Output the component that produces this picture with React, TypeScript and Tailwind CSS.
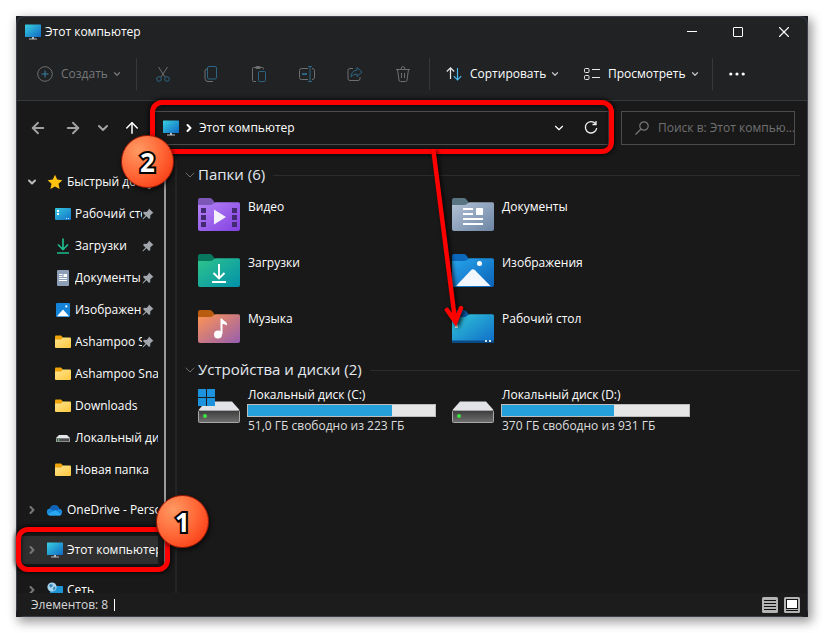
import {
  ArrowLeft,
  ArrowRight,
  ArrowUp,
  ChevronDown,
  ChevronRight,
  X
} from 'lucide-react';

import { FC, ReactNode } from 'react';

const MonitorIcon: FC = () => (
  <svg viewBox="0 0 16 16" className="size-4 flex-none">
    <defs>
      <linearGradient id="monitor" x1="0" y1="0" x2="1" y2="1">
        <stop offset="0" stopColor="#38d0e0" />
        <stop offset="1" stopColor="#1169c4" />
      </linearGradient>
    </defs>
    <rect y="0.500" width="16" height="12.500" rx="0.6" fill="url(#monitor)" />
    <path d="M7 13h2v1.500h3v1H4v-1h3z" fill="#b9bdc1" />
  </svg>
);

const StarIcon: FC = () => (
  <svg viewBox="0 0 16 16" className="size-4 flex-none">
    <path
      d="M8 .8l2.2 4.8 5.2.6-3.9 3.6 1.1 5.3L8 12.4l-4.6 2.7 1.1-5.3L.6 6.2l5.2-.6z"
      fill="#ffc20e"
    />
  </svg>
);

const DesktopIcon: FC = () => (
  <svg viewBox="0 0 16 16" className="size-4 flex-none">
    <defs>
      <linearGradient id="desk" x1="0" y1="0" x2="1" y2="1">
        <stop offset="0" stopColor="#35c8dc" />
        <stop offset="1" stopColor="#1272ca" />
      </linearGradient>
    </defs>
    <rect y="2" width="16" height="12" rx="1" fill="url(#desk)" />
    <path d="M2 4h2v2H2zM2 7h2v2H2z" fill="#fff" />
    <path d="M11 12h1v1h-1zM13 12h1v1h-1z" fill="#d6efff" />
  </svg>
);

const DownloadIcon: FC = () => (
  <svg viewBox="0 0 16 16" className="size-4 flex-none">
    <path
      d="M8 .5v11M3 6.500L8 11.500l5-5M2 15h12"
      fill="none"
      stroke="#1fb98c"
      strokeWidth="1.7"
    />
  </svg>
);

const DocumentIcon: FC = () => (
  <svg viewBox="0 0 16 16" className="size-4 flex-none">
    <rect x="2" width="12" height="16" rx="1" fill="#8d9fb6" />
    <path
      d="M4 4.5h3.5M4 6.5h3.5M4 8.5h8M4 10.5h8"
      stroke="#fff"
      strokeWidth="1.1"
    />
    <rect x="8.5" y="4" width="3.5" height="3" fill="#fff" />
  </svg>
);

const PictureIcon: FC = () => (
  <svg viewBox="0 0 16 16" className="size-4 flex-none">
    <rect x="1" y="1" width="14" height="14" rx="1" fill="#1583d8" />
    <path d="M2 14.2L8 7.5l6 6.7z" fill="#fff" />
    <circle cx="11.3" cy="4.4" r="1.1" fill="#fff" />
  </svg>
);

const FolderIcon: FC = () => (
  <svg viewBox="0 0 16 16" className="size-4 flex-none">
    <defs>
      <linearGradient id="folder" x1="0" y1="0" x2="1" y2="1">
        <stop offset="0" stopColor="#ffe590" />
        <stop offset="1" stopColor="#ffc83c" />
      </linearGradient>
    </defs>
    <path d="M0 2.5Q0 1.500 1 1.500H6L8 3.500V6H0z" fill="#f0a30a" />
    <path
      d="M0 5.500H6L8 3.500H15Q16 3.500 16 4.500V13Q16 14 15 14H1Q0 14 0 13z"
      fill="url(#folder)"
    />
  </svg>
);

const SmallDriveIcon: FC = () => (
  <svg viewBox="0 0 16 16" className="size-4 flex-none">
    <path d="M4 5h8l3 3H1z" fill="#e4e6e8" />
    <rect x="1" y="8" width="14" height="4" rx="0.5" fill="#9a9c9e" />
    <rect x="2" y="8.600" width="12" height="2.600" fill="#4a4c4e" />
    <rect x="3" y="9.300" width="1.300" height="1.300" fill="#5bea5b" />
  </svg>
);

const CloudIcon: FC = () => (
  <svg viewBox="0 0 16 16" className="size-4 flex-none">
    <path
      d="M3.500 13.500A3.500 3.500 0 0 1 3 6.500A4.800 4.800 0 0 1 12.200 6.800A3.400 3.400 0 0 1 12.500 13.500z"
      fill="#1787d8"
    />
    <path d="M3 6.500A4.800 4.800 0 0 1 12.200 6.800L8 9.500z" fill="#0f62b5" />
    <path d="M1 12L8.500 8l6 4.500Q13.800 13.500 12.500 13.500H3.500Q1.800 13.500 1 12z" fill="#2aa8f0" />
  </svg>
);

const NetworkIcon: FC = () => (
  <svg viewBox="0 0 16 16" className="size-4 flex-none">
    <rect x="3" y="4" width="13" height="10" rx="0.6" fill="#1d94d6" />
    <circle cx="5" cy="5" r="4.600" fill="#a9d4ee" />
    <path
      d="M2 3l2-1 2 1-1 2-2 .5zM6 5.500l2-1 .5 2L6.500 9z"
      fill="#3c86b8"
    />
  </svg>
);

const PinIcon: FC = () => (
  <svg viewBox="0 0 12 12" className="size-3 flex-none">
    <path
      d="M7 .5l4.500 4.500-1.300.5-2 2 .1 2.500L7 11 4.500 8.300 1 11.500l-.6-.4L3.500 7.500 1 5l1-1.200 2.500.1 2-2z"
      fill="#a0a6ab"
    />
  </svg>
);

type NavItem = {
  label: string;
  icon: ReactNode;
  pinned?: boolean;
};

const quickAccess: NavItem[] = [
  { label: 'Рабочий стол', icon: <DesktopIcon />, pinned: true },
  { label: 'Загрузки', icon: <DownloadIcon />, pinned: true },
  { label: 'Документы', icon: <DocumentIcon />, pinned: true },
  { label: 'Изображения', icon: <PictureIcon />, pinned: true },
  { label: 'Ashampoo Snap', icon: <FolderIcon />, pinned: true },
  { label: 'Ashampoo Snap', icon: <FolderIcon /> },
  { label: 'Downloads', icon: <FolderIcon /> },
  { label: 'Локальный диск', icon: <SmallDriveIcon /> },
  { label: 'Новая папка', icon: <FolderIcon /> }
];

const FolderBase: FC<{
  id: string;
  tab: string;
  from: string;
  to: string;
  children: ReactNode;
}> = ({ id, tab, from, to, children }) => (
  <svg viewBox="0 0 42 33" className="h-[33px] w-[42px] flex-none">
    <defs>
      <linearGradient id={id} x1="0" y1="0" x2="1" y2="1">
        <stop offset="0" stopColor={from} />
        <stop offset="1" stopColor={to} />
      </linearGradient>
    </defs>
    <path d="M0 2Q0 0 2 0H12Q13.500 0 14.500 1.500L17 5V10H0z" fill={tab} />
    <path
      d="M0 7H12Q14 7 15 6L16 5Q17 4.300 18 4.300H40.500Q42 4.300 42 6V31Q42 33 40 33H2Q0 33 0 31z"
      fill={`url(#${id})`}
    />
    {children}
  </svg>
);

const folders = [
  {
    label: 'Видео',
    icon: (
      <FolderBase id="video" tab="#7d57b8" from="#b483f7" to="#8340e0">
        <path
          d="M3 10h5v5H3zM3 17h5v5H3zM3 24h5v5H3zM34 10h5v5h-5zM34 17h5v5h-5zM34 24h5v5h-5z"
          fill="#432a72"
        />
        <path d="M16 11.500L28 19 16 26.500z" fill="#f4f0fa" />
      </FolderBase>
    )
  },
  {
    label: 'Документы',
    icon: (
      <FolderBase id="docs" tab="#587483" from="#b3c2d6" to="#6c85a4">
        <path
          d="M11 11h10M11 16h10M11 21h20M11 26h20"
          stroke="#fff"
          strokeWidth="2"
        />
        <rect x="24" y="10" width="7" height="7" rx="0.500" fill="#fff" />
      </FolderBase>
    )
  },
  {
    label: 'Загрузки',
    icon: (
      <FolderBase id="downloads" tab="#08785f" from="#2fc58c" to="#0290aa">
        <path
          d="M21 10v14M15.500 19l5.500 5.500 5.500-5.500M14 28h14"
          fill="none"
          stroke="#fff"
          strokeWidth="1.900"
        />
      </FolderBase>
    )
  },
  {
    label: 'Изображения',
    icon: (
      <FolderBase id="images" tab="#0b68bb" from="#27a5ec" to="#0c62b8">
        <path
          d="M4 32L19 16.300Q21 14.300 23 16.300L38.500 32z"
          fill="#f2f7fd"
        />
        <circle cx="27.500" cy="9.500" r="2.500" fill="#fff" />
      </FolderBase>
    )
  },
  {
    label: 'Музыка',
    icon: (
      <FolderBase id="music" tab="#b85c10" from="#ff9552" to="#965eb0">
        <path
          d="M22.500 24V8.500H24C25 11 29 11.500 29 14V15.500C27 14 25 14 24.500 14V24z"
          fill="#fff"
        />
        <circle cx="20" cy="24.500" r="4" fill="#fff" />
      </FolderBase>
    )
  },
  {
    label: 'Рабочий стол',
    icon: (
      <FolderBase id="desktop" tab="#0b5db0" from="#31c6d8" to="#0f6bc8">
        <path d="M0 30.500H42V31Q42 33 40 33H2Q0 33 0 31z" fill="#0b4a85" />
        <path d="M3 15h3v3H3zM33 30h2v2h-2zM37 30h2v2h-2z" fill="#cfe9ee" />
      </FolderBase>
    )
  }
];

const drives = [
  {
    label: 'Локальный диск (C:)',
    info: '51,0 ГБ свободно из 223 ГБ',
    used: 77,
    system: true
  },
  {
    label: 'Локальный диск (D:)',
    info: '370 ГБ свободно из 931 ГБ',
    used: 60,
    system: false
  }
];

const DriveIcon: FC<{ system: boolean }> = ({ system }) => (
  <svg viewBox="0 0 42 34" className="h-[34px] w-[42px] flex-none">
    <defs>
      <linearGradient id="drive" x1="0" y1="0" x2="0" y2="1">
        <stop offset="0" stopColor="#3c3c3c" />
        <stop offset="1" stopColor="#707070" />
      </linearGradient>
    </defs>
    <path d="M8 12.500H34L41.500 21H.5z" fill="#e2e3e7" />
    <rect
      x="0.500"
      y="21.500"
      width="41"
      height="12"
      rx="1"
      fill="url(#drive)"
      stroke="#a8a8a8"
    />
    <circle cx="7" cy="27" r="2" fill="#3fe03f" />
    {system && (
      <>
        <rect y="0" width="16" height="17" fill="#191919" />
        <path d="M0 0h8v8H0zM9 0h8v8H9zM0 9h8v8H0zM9 9h8v8H9z" fill="#1c93dc" />
      </>
    )}
  </svg>
);

const toolIcons = [
  {
    label: 'Вырезать',
    icon: (
      <>
        <path d="M3.500 1l6.500 10M12.500 1L6 11" stroke="#6d6f71" />
        <circle cx="4" cy="13" r="2.300" stroke="#2d6684" />
        <circle cx="12" cy="13" r="2.300" stroke="#2d6684" />
      </>
    )
  },
  {
    label: 'Копировать',
    icon: (
      <>
        <path d="M4 3Q2 3 2 5V12.500Q2 15.500 5 15.500H10" stroke="#6d6f71" />
        <rect x="4.500" y="0.500" width="9" height="12.500" rx="1.500" stroke="#2d6684" />
      </>
    )
  },
  {
    label: 'Вставить',
    icon: (
      <>
        <path d="M5 15.500H2.500Q1.500 15.500 1.500 14.500V2.500Q1.500 1.500 2.500 1.500H11.500Q12.500 1.500 12.500 2.500V3.500" stroke="#6d6f71" />
        <rect x="4.500" y="0.500" width="5" height="2" rx="1" stroke="#6d6f71" />
        <rect x="7.500" y="5.500" width="7" height="10" rx="1" stroke="#2d6684" />
      </>
    )
  },
  {
    label: 'Переименовать',
    icon: (
      <>
        <path d="M9 2.500H2.500Q.5 2.500.5 4.500V11.500Q.5 13.500 2.500 13.500H9M13 2.500Q15.500 2.500 15.500 4.500V11.500Q15.500 13.500 13 13.500" stroke="#6d6f71" />
        <path d="M11 .5V15.500M9 .5h4M9 15.500h4" stroke="#2d6684" />
        <path d="M3 8h5" stroke="#2d6684" strokeWidth="2" />
      </>
    )
  },
  {
    label: 'Поделиться',
    icon: (
      <>
        <path d="M6 2.500H3Q1 2.500 1 4.500V12.500Q1 14.500 3 14.500H11Q13 14.500 13 12.500V11" stroke="#6d6f71" />
        <path d="M10 1.500L15 6l-5 4.500V8Q6 8 4 11Q4 5 10 4z" stroke="#2d6684" />
      </>
    )
  },
  {
    label: 'Удалить',
    icon: (
      <path
        d="M1 3.500h14M6 3.500Q6 .5 8 .5T10 3.500M2.500 3.500L4 14Q4 15.500 5.500 15.500H10.500Q12 15.500 12 14L13.500 3.500M6.500 7v5M9.500 7v5"
        stroke="#6d6f71"
      />
    )
  }
];

const Divider: FC = () => <div className="h-8 w-px flex-none bg-[#37383a]" />;

const Badge: FC<{ value: string }> = ({ value }) => (
  <span className="flex size-[53px] items-center justify-center rounded-full border border-[#a51a05] bg-radial-[at_32%_28%] from-[#ff9a62] via-[#ff6535] to-[#f52c08] text-[26px] leading-8 font-bold text-white shadow-[1px_2px_5px_rgba(0,0,0,0.7)] [-webkit-text-stroke:4px_black] [paint-order:stroke_fill]">
    {value}
  </span>
);

const TitleBar: FC = () => (
  <header className="flex h-[31px] flex-none items-center pb-0.5 pl-2">
    <MonitorIcon />
    <h1 className="ml-1 flex-1 text-white">Этот компьютер</h1>
    <button
      type="button"
      aria-label="Свернуть"
      className="flex h-full w-[46px] items-center justify-center"
    >
      <span className="h-px w-2.5 bg-white" />
    </button>
    <button
      type="button"
      aria-label="Развернуть"
      className="flex h-full w-[46px] items-center justify-center"
    >
      <span className="size-2.5 rounded-[1px] border border-white" />
    </button>
    <button
      type="button"
      aria-label="Закрыть"
      className="flex h-full w-[46px] items-center justify-center"
    >
      <X className="size-[18px] text-white" strokeWidth={1.5} />
    </button>
  </header>
);

const Toolbar: FC = () => (
  <div className="flex h-[53px] flex-none items-center border-b border-[#36383b] text-white">
    <button
      type="button"
      disabled
      className="flex w-[119px] items-center pl-5 text-[#777879]"
    >
      <svg viewBox="0 0 16 16" className="size-4 flex-none" fill="none">
        <circle cx="8" cy="8" r="7.300" stroke="#6d6f71" />
        <path d="M8 4.500v7M4.500 8h7" stroke="#3580a8" />
      </svg>
      <span className="ml-2">Создать</span>
      <ChevronDown className="ml-1 size-2.5" strokeWidth={3} />
    </button>
    <Divider />
    <div className="mx-0.5 flex">
      {toolIcons.map(t => (
        <button
          key={t.label}
          type="button"
          disabled
          aria-label={t.label}
          className="flex h-8 w-12 items-center justify-center"
        >
          <svg viewBox="0 0 16 16" className="size-4" fill="none">
            {t.icon}
          </svg>
        </button>
      ))}
    </div>
    <Divider />
    <button type="button" className="flex w-[138px] items-center pl-4">
      <svg viewBox="0 0 16 16" className="size-4 flex-none" fill="none">
        <path d="M4.500 13V2M.8 5.500L4.500 1.800 8.200 5.500" stroke="#e8e8e8" strokeWidth="1.200" />
        <path d="M11.500 2v12M7.800 10.200l3.700 3.700 3.700-3.700" stroke="#4cb8f0" strokeWidth="1.200" />
      </svg>
      <span className="ml-2">Сортировать</span>
      <ChevronDown className="ml-1 size-2.5 text-[#c0c0c0]" strokeWidth={3} />
    </button>
    <button type="button" className="flex w-[144px] items-center pl-4">
      <svg
        viewBox="0 0 16 16"
        className="size-4 flex-none"
        fill="none"
        stroke="#e8e8e8"
      >
        <rect x="0.500" y="2.500" width="4.500" height="4" rx="1" />
        <rect x="0.500" y="9.500" width="4.500" height="4" rx="1" />
        <path d="M8 3.500h8M8 11.500h8" />
      </svg>
      <span className="ml-2">Просмотреть</span>
      <ChevronDown className="ml-1 size-2.5 text-[#c0c0c0]" strokeWidth={3} />
    </button>
    <Divider />
    <button type="button" aria-label="Подробнее" className="px-4">
      <svg viewBox="0 0 16 16" className="size-4" fill="#fff">
        <circle cx="1.800" cy="8" r="1.600" />
        <circle cx="8" cy="8" r="1.600" />
        <circle cx="14.200" cy="8" r="1.600" />
      </svg>
    </button>
  </div>
);

const AddressRow: FC = () => (
  <div className="flex flex-none items-center bg-[#191919] pt-2.5 pr-3 pb-[15px] pl-[5px]">
    <button type="button" aria-label="Назад" className="flex w-8 justify-center">
      <ArrowLeft className="size-[18px] text-[#a2a2a2]" strokeWidth={2.5} />
    </button>
    <button
      type="button"
      aria-label="Вперёд"
      className="ml-[3px] flex w-8 justify-center"
    >
      <ArrowRight className="size-[18px] text-[#a2a2a2]" strokeWidth={2.5} />
    </button>
    <button
      type="button"
      aria-label="Последние расположения"
      className="flex w-7 justify-center"
    >
      <ChevronDown className="size-4 text-[#a2a2a2]" strokeWidth={3} />
    </button>
    <button
      type="button"
      aria-label="Вверх"
      className="flex w-[30px] justify-center"
    >
      <ArrowUp className="size-[18px] text-white" strokeWidth={2} />
    </button>
    <div className="relative ml-1.5 flex h-[34px] min-w-0 flex-1 items-center border border-[#4c4c4c] pl-[9px]">
      <MonitorIcon />
      <ChevronRight className="ml-1 size-3 text-white" strokeWidth={4} />
      <span className="ml-1 flex-1 text-white">Этот компьютер</span>
      <button type="button" aria-label="Журнал" className="flex w-8 justify-center">
        <ChevronDown className="size-3.5 text-white" strokeWidth={2} />
      </button>
      <button
        type="button"
        aria-label="Обновить"
        className="mr-px flex w-8 justify-center"
      >
        <svg viewBox="0 0 16 16" className="size-4" fill="none">
          <path
            d="M12.500 3.700A5.700 5.700 0 1 0 13.700 8M13 1v3.500H9.500"
            stroke="#eee"
            strokeWidth="1.300"
          />
        </svg>
      </button>
      <div className="pointer-events-none absolute -top-3 -right-1.5 -bottom-2.5 -left-1 z-10 rounded-xl border-[5px] border-[#fe0000] shadow-[0_0_4px_1px_rgba(0,0,0,0.8),inset_0_0_4px_rgba(0,0,0,0.8)]" />
      <svg
        viewBox="0 0 40 180"
        className="pointer-events-none absolute top-9 left-[272px] z-20 h-[180px] w-10 drop-shadow-[2px_2px_2px_rgba(0,0,0,0.8)]"
        fill="none"
        stroke="#fe0000"
        strokeWidth="4.500"
        strokeLinecap="round"
      >
        <path d="M7.500 3L29 172M21 162L29.500 174L35 160" />
      </svg>
      <div className="pointer-events-none absolute top-[23px] -left-[33px] z-20">
        <Badge value="2" />
      </div>
    </div>
    <div className="ml-3 flex h-[34px] w-[174px] flex-none items-center border border-[#4c4c4c] pl-3">
      <svg
        viewBox="0 0 16 16"
        className="size-4 flex-none"
        fill="none"
        stroke="#777"
        strokeWidth="1.200"
      >
        <circle cx="10" cy="6" r="4.200" />
        <path d="M7 9l-5.500 5.500" />
      </svg>
      <input
        type="text"
        aria-label="Поиск"
        placeholder="Поиск в: Этот компью..."
        className="ml-2 w-full min-w-0 bg-transparent outline-none placeholder:text-[#707070]"
      />
    </div>
  </div>
);

const TopItem: FC<{
  label: string;
  icon: ReactNode;
  open?: boolean;
  active?: boolean;
}> = ({ label, icon, open, active }) => (
  <li>
    <a
      href="#"
      className={
        active
          ? 'ml-[3px] flex h-7 items-center bg-[#2f2f2f] pl-1.5'
          : 'ml-[3px] flex h-7 items-center pl-1.5'
      }
    >
      {open ? (
        <ChevronDown className="mr-[9px] size-3 flex-none text-[#bdbdbd]" strokeWidth={4} />
      ) : (
        <ChevronRight className="mr-[9px] size-3 flex-none text-[#777]" strokeWidth={4} />
      )}
      {icon}
      <span className="ml-1 overflow-hidden whitespace-nowrap">{label}</span>
    </a>
  </li>
);

const Sidebar: FC = () => (
  <aside className="relative flex w-[160px] flex-none border-r-2 border-[#242424] text-white">
    <nav className="w-[141px] overflow-hidden pt-2">
      <ul>
        <TopItem label="Быстрый доступ" icon={<StarIcon />} open />
      </ul>
      <ul className="pt-0.5">
        {quickAccess.map((item, i) => (
          <li key={i}>
            <a href="#" className="flex h-8 items-center pl-[38px]">
              {item.icon}
              <span className="ml-1 flex-1 overflow-hidden whitespace-nowrap">
                {item.label}
              </span>
              {item.pinned && (
                <span className="w-4">
                  <PinIcon />
                </span>
              )}
            </a>
          </li>
        ))}
      </ul>
      <ul className="flex flex-col gap-3 pt-2.5">
        <TopItem label="OneDrive - Personal" icon={<CloudIcon />} />
        <TopItem label="Этот компьютер" icon={<MonitorIcon />} active />
        <TopItem label="Сеть" icon={<NetworkIcon />} />
      </ul>
    </nav>
    <div className="mb-7 ml-1.5 w-0.5 bg-[#9a9a9a]" />
    <div className="pointer-events-none absolute top-[367px] -left-px z-10 h-[45px] w-[154px] rounded-xl border-[5px] border-[#fe0000] shadow-[0_0_4px_1px_rgba(0,0,0,0.8),inset_0_0_4px_rgba(0,0,0,0.8)]" />
    <div className="pointer-events-none absolute top-[335px] left-[139px] z-20">
      <Badge value="1" />
    </div>
  </aside>
);

const GroupHeader: FC<{ title: string }> = ({ title }) => (
  <div className="mb-[3px] flex h-6 items-center">
    <ChevronDown className="size-4 text-[#6d6d6d]" strokeWidth={1.5} />
    <h2 className="pb-0.5 text-[15px] leading-5 text-[#e4e9f0]">{title}</h2>
    <div className="ml-2 h-px flex-1 bg-[#2c2c2c]" />
  </div>
);

const Content: FC = () => (
  <main className="min-w-0 flex-1 overflow-hidden pt-[3px] pr-[7px] pl-[5px] text-white">
    <section>
      <GroupHeader title="Папки (6)" />
      <ul className="grid grid-cols-[254px_254px] pl-4">
        {folders.map(f => (
          <li key={f.label} className="flex h-14 items-start pt-2">
            {f.icon}
            <span className="ml-2 leading-[18px]">{f.label}</span>
          </li>
        ))}
      </ul>
    </section>
    <section>
      <GroupHeader title="Устройства и диски (2)" />
      <ul className="grid grid-cols-[254px_254px] pl-4">
        {drives.map(d => (
          <li key={d.label} className="flex items-start pt-0.5">
            <div className="pt-0.5">
              <DriveIcon system={d.system} />
            </div>
            <div className="ml-[7px] w-[189px]">
              <div className="px-px leading-4">{d.label}</div>
              <div className="my-px h-[13px] border border-[#bcbcbc] bg-[#e6e6e6]">
                <div
                  className="h-full bg-[#26a0da]"
                  style={{ width: `${d.used}%` }}
                />
              </div>
              <div className="px-px leading-4 text-[#dedede]">{d.info}</div>
            </div>
          </li>
        ))}
      </ul>
    </section>
  </main>
);

const StatusBar: FC = () => (
  <footer className="flex h-[23px] flex-none items-center bg-[#1c1c1c] pr-[7px] pl-3.5 text-[#d8d8d8]">
    <span>Элементов: 8</span>
    <span className="ml-1.5 h-3 w-px bg-white" />
    <button type="button" aria-label="Таблица" className="ml-auto">
      <svg viewBox="0 0 16 16" className="size-4">
        <rect width="16" height="16" rx="1.500" fill="#b4b4b4" />
        <path
          d="M2 3.500h12M2 6.500h12M2 9.500h12M2 12.500h12"
          stroke="#111"
        />
      </svg>
    </button>
    <button type="button" aria-label="Крупные значки" className="ml-1.5">
      <svg viewBox="0 0 16 16" className="size-4">
        <rect width="16" height="16" rx="1.500" fill="#b4b4b4" />
        <rect x="2.500" y="2.500" width="11" height="9" fill="#fff" stroke="#111" />
        <path d="M2 13.500h12" stroke="#111" />
      </svg>
    </button>
  </footer>
);

export default function App() {
  return (
    <div className="flex h-screen bg-white p-4 font-['Open_Sans','Liberation_Sans',sans-serif] text-[12px] leading-4">
      <div className="min-w-0 flex-1 bg-[#1d1f22] shadow-[3px_4px_10px_1px_rgba(0,0,0,0.4)]">
        <div className="flex h-full flex-col rounded-lg border border-[#3b404c] bg-[#202224]">
          <TitleBar />
          <Toolbar />
          <AddressRow />
          <div className="flex min-h-0 flex-1 bg-[#191919]">
            <Sidebar />
            <Content />
          </div>
          <StatusBar />
        </div>
      </div>
    </div>
  );
}
